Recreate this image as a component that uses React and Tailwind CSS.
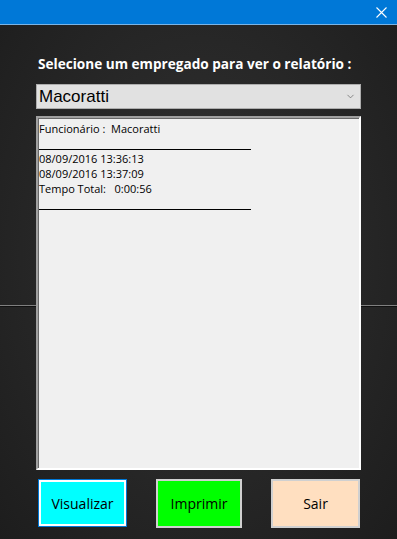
import { ChevronDown } from "lucide-react";

const reportLines = [
  "Funcionário :  Macoratti",
  null,
  "08/09/2016 13:36:13",
  "08/09/2016 13:37:09",
  "Tempo Total:   0:00:56",
  null,
];

export default function App() {
  return (
    <div className="w-[397px] h-[539px] flex flex-col overflow-hidden font-['Open_Sans',sans-serif]">
      {/* Title bar */}
      <div className="h-[25px] shrink-0 bg-[#0078d7] border-b border-[#7ab4e6] flex items-center justify-end pr-[10px]">
        <svg width="11" height="11" viewBox="0 0 11 11" className="text-white">
          <path d="M0.5 0.5 L10.5 10.5 M10.5 0.5 L0.5 10.5" stroke="currentColor" strokeWidth="1.1" />
        </svg>
      </div>

      {/* Form body */}
      <div className="relative flex-1 bg-[radial-gradient(ellipse_at_50%_45%,#343434_0%,#292929_45%,#1d1d1d_100%)]">
        {/* decorative divider behind the report box */}
        <div className="absolute left-0 right-0 top-[280px] h-[2px] bg-[#808080] border-b border-[#111]" />

        <div className="relative flex flex-col px-[36px] pt-[29px]">
          <p className="pl-[2px] h-[20px] text-[13.6px] leading-[20px] font-bold text-white">
            Selecione um empregado para ver o relatório :
          </p>

          <div className="mt-[10px] h-[25px] bg-[#e1e1e1] border border-[#adadad] flex items-center justify-between pl-[2px] pr-[4px]">
            <span className="font-['Liberation_Sans',Arial,sans-serif] text-[17px] text-black leading-none">
              Macoratti
            </span>
            <ChevronDown size={11} strokeWidth={1.5} className="text-[#606060]" />
          </div>

          <div className="mt-[7px] h-[354px] bg-[#f0f0f0] border-2 border-t-[#a0a0a0] border-l-[#a0a0a0] border-r-white border-b-white shadow-[inset_1px_1px_0_#696969]">
            <div className="pt-[3px] pl-[1px] text-[11px] leading-[15px] text-black">
              {reportLines.map((line, i) =>
                line ? (
                  <div key={i} className="h-[15px] whitespace-pre">{line}</div>
                ) : (
                  <div key={i} className="h-[15px] flex items-end pb-[1px]">
                    <div className="w-[212px] h-[1px] bg-black" />
                  </div>
                )
              )}
            </div>
          </div>

          <div className="mt-[9px] flex justify-between pl-[2px] pr-[1px]">
            <button className="w-[89px] h-[48px] bg-[#00ffff] border border-[#0078d7] shadow-[inset_0_0_0_2px_white] text-[14px] text-black">
              Visualizar
            </button>
            <button className="w-[86px] h-[49px] bg-[#00ff00] border-2 border-[#d0d0d0] text-[14px] text-black">
              Imprimir
            </button>
            <button className="w-[89px] h-[49px] bg-[#ffdfc0] border-2 border-[#d0d0d0] text-[14px] text-black">
              Sair
            </button>
          </div>
        </div>
      </div>
    </div>
  );
}
